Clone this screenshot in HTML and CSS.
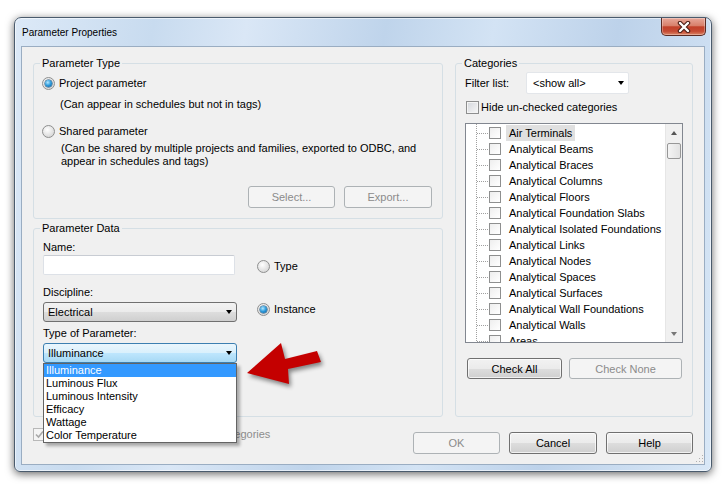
FILE: index.html
```html
<!DOCTYPE html>
<html lang="en">
<head>
<meta charset="UTF-8">
<title>Parameter Properties</title>
<link rel="stylesheet" href="styles.css">
</head>
<body>

<!-- Dialog window -->
<div class="window">
    <div class="titlebar">
        <span class="title">Parameter Properties</span>
        <button class="close">
            <svg width="14" height="12" viewBox="0 0 14 12">
                <path d="M3 2 L11 10 M11 2 L3 10" stroke="#4a1d15" stroke-width="4.5" stroke-linecap="round"/>
                <path d="M3 2 L11 10 M11 2 L3 10" stroke="#fff" stroke-width="2.4" stroke-linecap="round"/>
            </svg>
        </button>
    </div>

    <div class="client">
        <div class="main">
            <div class="col-left">
                <!-- Parameter Type -->
                <fieldset class="group group-type">
                    <legend>Parameter Type</legend>
                    <div class="radio-row rr-project"><span class="radio checked"></span>Project parameter</div>
                    <div class="hint hint-project">(Can appear in schedules but not in tags)</div>
                    <div class="radio-row rr-shared"><span class="radio"></span>Shared parameter</div>
                    <div class="hint hint-shared">(Can be shared by multiple projects and families, exported to ODBC, and<br>appear in schedules and tags)</div>
                    <div class="btn-row">
                        <button class="btn disabled">Select...</button>
                        <button class="btn btn-wide disabled">Export...</button>
                    </div>
                </fieldset>

                <!-- Parameter Data -->
                <fieldset class="group group-data">
                    <legend>Parameter Data</legend>
                    <div class="data-cols">
                        <div class="data-fields">
                            <div class="label lbl-name">Name:</div>
                            <div class="textbox"></div>
                            <div class="label lbl-disc">Discipline:</div>
                            <div class="combo">Electrical<span class="caret"></span></div>
                            <div class="label lbl-type">Type of Parameter:</div>
                            <div class="combo-wrap">
                                <div class="combo focused">Illuminance<span class="caret"></span></div>
                                <ul class="droplist">
                                    <li class="sel">Illuminance</li>
                                    <li>Luminous Flux</li>
                                    <li>Luminous Intensity</li>
                                    <li>Efficacy</li>
                                    <li>Wattage</li>
                                    <li>Color Temperature</li>
                                </ul>
                            </div>
                        </div>
                        <div class="data-radios">
                            <div class="radio-row rr-type"><span class="radio"></span>Type</div>
                            <div class="radio-row rr-inst"><span class="radio checked"></span>Instance</div>
                        </div>
                    </div>
                </fieldset>
            </div>

            <!-- Categories -->
            <fieldset class="group group-cats">
                <legend>Categories</legend>
                <div class="filter-row">
                    <span class="filter-label">Filter list:</span>
                    <div class="combo combo-white">&lt;show all&gt;<span class="caret"></span></div>
                </div>
                <div class="hide-row"><span class="check"></span>Hide un-checked categories</div>
                <div class="tree-box">
                    <ul class="tree">
                        <li class="hot"><span class="check"></span><span class="name">Air Terminals</span></li>
                        <li><span class="check"></span><span class="name">Analytical Beams</span></li>
                        <li><span class="check"></span><span class="name">Analytical Braces</span></li>
                        <li><span class="check"></span><span class="name">Analytical Columns</span></li>
                        <li><span class="check"></span><span class="name">Analytical Floors</span></li>
                        <li><span class="check"></span><span class="name">Analytical Foundation Slabs</span></li>
                        <li><span class="check"></span><span class="name">Analytical Isolated Foundations</span></li>
                        <li><span class="check"></span><span class="name">Analytical Links</span></li>
                        <li><span class="check"></span><span class="name">Analytical Nodes</span></li>
                        <li><span class="check"></span><span class="name">Analytical Spaces</span></li>
                        <li><span class="check"></span><span class="name">Analytical Surfaces</span></li>
                        <li><span class="check"></span><span class="name">Analytical Wall Foundations</span></li>
                        <li><span class="check"></span><span class="name">Analytical Walls</span></li>
                        <li><span class="check"></span><span class="name">Areas</span></li>
                    </ul>
                    <div class="vscroll">
                        <span class="sb-btn"><span class="tri-up"></span></span>
                        <span class="sb-thumb"></span>
                        <span class="sb-btn sb-down"><span class="tri-down"></span></span>
                    </div>
                </div>
                <div class="cat-btns">
                    <button class="btn btn-checkall">Check All</button>
                    <button class="btn btn-checknone disabled">Check None</button>
                </div>
            </fieldset>
        </div>

        <div class="bottom">
            <div class="check-row disabled">
                <span class="check checked">
                    <svg width="11" height="11" viewBox="0 0 11 11"><path d="M2 5.5 L4.5 8 L9 2.5" fill="none" stroke="#a8a8a8" stroke-width="1.6"/></svg>
                </span>Add to all elements in the selected categories
            </div>
            <div class="dlg-buttons">
                <button class="btn disabled">OK</button>
                <button class="btn btn-wide">Cancel</button>
                <button class="btn">Help</button>
            </div>
        </div>

        <svg class="grip" width="8" height="8" viewBox="0 0 8 8">
            <rect x="6" y="0" width="1" height="1" fill="#b0b0b0"/>
            <rect x="3" y="3" width="1" height="1" fill="#b0b0b0"/>
            <rect x="6" y="3" width="1" height="1" fill="#b0b0b0"/>
            <rect x="0" y="6" width="1" height="1" fill="#b0b0b0"/>
            <rect x="3" y="6" width="1" height="1" fill="#b0b0b0"/>
            <rect x="6" y="6" width="1" height="1" fill="#b0b0b0"/>
        </svg>
    </div>
</div>

<!-- Red callout arrow -->
<svg class="arrow" width="90" height="55" viewBox="0 0 90 55">
    <polygon points="7,37 41,7 45,23 77,15 81,26 48,33 49,48" fill="#c40000"/>
</svg>

</body>
</html>
```

FILE: styles.css
```css
body {
    margin: 0;
    width: 724px;
    height: 485px;
    background: #fff;
    font-family: "Liberation Sans", Arial, sans-serif;
    font-size: 11px;
    color: #000;
    position: relative;
    overflow: hidden;
}

button {
    font: inherit;
    padding: 0;
}

/* window frame */
.window {
    box-sizing: border-box;
    width: 698px;
    height: 455px;
    margin: 17px 0 0 14px;
    padding: 0 6px 6px 6px;
    border: 1px solid #4a5b6d;
    border-radius: 7px 7px 6px 6px;
    background: linear-gradient(100deg, #dce9f7 0%, #c8dbef 18%, #dae7f6 30%, #bfd4eb 48%, #d3e3f4 62%, #bdd2ea 78%, #d9e8f7 100%);
    box-shadow: 0 2px 8px rgba(0, 0, 0, 0.6), inset 0 0 0 1px rgba(255, 255, 255, 0.55);
}

.titlebar {
    display: flex;
    justify-content: space-between;
    align-items: flex-start;
    height: 28px;
}

.title {
    margin: 8px 0 0 1px;
    line-height: 14px;
    font-size: 10px;
}

.close {
    box-sizing: border-box;
    width: 45px;
    height: 18px;
    margin-right: -1px;
    border: 1px solid #5b2a22;
    border-top: 0;
    border-radius: 0 0 5px 5px;
    background: linear-gradient(#e8a89a 0%, #d8806b 45%, #c2412a 52%, #c54b34 78%, #db8767 100%);
    box-shadow: inset 0 0 0 1px rgba(255, 255, 255, 0.3);
    display: flex;
    align-items: center;
    justify-content: center;
}

/* client area */
.client {
    position: relative;
    box-sizing: border-box;
    height: 419px;
    border: 1px solid #9aadc2;
    background: #f0f0f0;
    padding: 9px 11px 0 11px;
}

.main {
    display: flex;
    gap: 12px;
    height: 361px;
}

.col-left {
    width: 410px;
    display: flex;
    flex-direction: column;
    gap: 2px;
}

.group {
    box-sizing: border-box;
    margin: 0;
    padding: 0;
    min-width: 0;
    border: 1px solid #d5dfe5;
    border-radius: 3px;
}

.group legend {
    margin-left: 6px;
    padding: 0 2px;
    line-height: 14px;
}

.group-type { height: 163px; }
.group-data { height: 196px; }
.group-cats { width: 238px; height: 361px; }

/* radios and checks */
.radio-row {
    display: flex;
    align-items: center;
    gap: 4px;
    height: 14px;
}

.radio {
    box-sizing: border-box;
    width: 13px;
    height: 13px;
    flex: none;
    border: 1px solid #8e8f8f;
    border-radius: 50%;
    background: radial-gradient(circle at 40% 35%, #ffffff, #dedede 65%, #cfcfcf);
    display: flex;
    align-items: center;
    justify-content: center;
}

.radio.checked::after {
    content: "";
    width: 7px;
    height: 7px;
    border-radius: 50%;
    background: radial-gradient(circle at 40% 35%, #b4e8ff, #2a98da 50%, #0b5894);
    box-shadow: 0 0 0 0.5px #174a72;
}

.check {
    box-sizing: border-box;
    width: 13px;
    height: 13px;
    flex: none;
    border: 1px solid #8e8f8f;
    background: linear-gradient(135deg, #d4d7dc, #f7f7f7);
    box-shadow: inset 0 0 0 1px #f4f4f4;
    display: flex;
    align-items: center;
    justify-content: center;
}

.check-row.disabled .check {
    border-color: #b8b8b8;
    background: #f4f4f4;
}

/* parameter type */
.rr-project { margin: 6px 0 0 8px; }
.hint { line-height: 14px; }
.hint-project { margin: 7px 0 0 26px; }
.rr-shared { margin: 13px 0 0 8px; }
.hint-shared { margin: 4px 0 0 27px; line-height: 13px; }

.btn-row {
    display: flex;
    justify-content: flex-end;
    gap: 9px;
    margin-top: 18px;
    padding-right: 10px;
}

/* buttons */
.btn {
    box-sizing: border-box;
    width: 87px;
    height: 22px;
    color: #000;
    border: 1px solid #707070;
    border-radius: 3px;
    background: linear-gradient(#f2f2f2 0%, #ebebeb 50%, #dddddd 51%, #cfcfcf 100%);
    box-shadow: inset 0 0 0 1px rgba(255, 255, 255, 0.7);
}

.btn-wide { width: 88px; }

.btn.disabled {
    color: #8b8b8b;
    border-color: #adb2b5;
    background: #f4f4f4;
    box-shadow: none;
}

/* parameter data */
.data-cols {
    display: flex;
    padding-left: 9px;
}

.data-fields {
    width: 194px;
    display: flex;
    flex-direction: column;
}

.label { line-height: 14px; }
.lbl-name { margin-top: 5px; }
.lbl-disc { margin-top: 10px; }
.lbl-type { margin-top: 4px; }

.textbox {
    box-sizing: border-box;
    width: 192px;
    height: 20px;
    margin-top: 1px;
    background: #fff;
    border: 1px solid #dde1e7;
    border-top-color: #c8ccd3;
    border-radius: 2px;
}

.combo {
    box-sizing: border-box;
    height: 20px;
    margin-top: 3px;
    padding: 0 4px 0 4px;
    display: flex;
    align-items: center;
    border: 1px solid #707070;
    border-radius: 3px;
    background: linear-gradient(#f2f2f2 0%, #ebebeb 50%, #dddddd 51%, #cfcfcf 100%);
}

.combo.focused {
    border-color: #3c7fb1;
    background: linear-gradient(#eaf6fd 0%, #d9f0fc 50%, #bee6fd 51%, #a7d9f5 100%);
}

.caret {
    margin-left: auto;
    width: 0;
    height: 0;
    border-left: 3.5px solid transparent;
    border-right: 3.5px solid transparent;
    border-top: 4px solid #000;
}

.combo-wrap {
    position: relative;
}

.droplist {
    position: absolute;
    z-index: 5;
    left: 0;
    top: 100%;
    box-sizing: border-box;
    width: 194px;
    margin: 0;
    padding: 0;
    list-style: none;
    background: #fff;
    border: 1px solid #646464;
    box-shadow: 3px 3px 3px rgba(0, 0, 0, 0.3);
}

.droplist li {
    line-height: 13px;
    padding-left: 2px;
}

.droplist li.sel {
    background: #3399ff;
    color: #fff;
}

.data-radios {
    margin-left: 20px;
}

.rr-type { margin-top: 24px; }
.rr-inst { margin-top: 29px; }

/* categories */
.filter-row {
    display: flex;
    align-items: center;
    margin: 2px 0 0 9px;
}

.filter-label { width: 61px; }

.combo-white {
    width: 103px;
    height: 22px;
    margin-top: 0;
    padding-left: 6px;
    background: #fff;
    border-color: #e3e6ea;
    border-radius: 2px;
}

.hide-row {
    display: flex;
    align-items: center;
    gap: 2px;
    height: 14px;
    margin: 6px 0 0 10px;
}

.tree-box {
    box-sizing: border-box;
    display: flex;
    width: 218px;
    height: 220px;
    margin: 9px 0 0 9px;
    border: 1px solid #828790;
    background: #fff;
}

.tree {
    flex: 1;
    margin: 0;
    padding: 1px 0 0 0;
    list-style: none;
    overflow: hidden;
    background: repeating-linear-gradient(#a0a0a0 0 1px, transparent 1px 2px) 10px 0 / 1px 100% no-repeat;
}

.tree li {
    display: flex;
    align-items: center;
    height: 16px;
}

.tree li::before {
    content: "";
    width: 11px;
    height: 1px;
    margin-left: 11px;
    background: repeating-linear-gradient(90deg, #a0a0a0 0 1px, transparent 1px 2px);
}

.tree .check {
    width: 12px;
    height: 12px;
    margin-left: 1px;
    background: linear-gradient(135deg, #eeeeee, #ffffff);
    box-shadow: none;
}

.tree .name {
    margin-left: 5px;
    padding: 0 3px;
    line-height: 16px;
    white-space: nowrap;
}

.tree li.hot .name {
    background: #e0e0e0;
}

.vscroll {
    width: 16px;
    display: flex;
    flex-direction: column;
    background: #f0f0f0;
    border-left: 1px solid #e6e6e6;
}

.sb-btn {
    height: 17px;
    display: flex;
    align-items: center;
    justify-content: center;
}

.sb-down { margin-top: auto; }

.tri-up, .tri-down {
    width: 0;
    height: 0;
    border-left: 3.5px solid transparent;
    border-right: 3.5px solid transparent;
}

.tri-up { border-bottom: 4px solid #555; }
.tri-down { border-top: 4px solid #777; }

.sb-thumb {
    box-sizing: border-box;
    height: 16px;
    margin: 2px 0 0 1px;
    width: 14px;
    border: 1px solid #979797;
    border-radius: 2px;
    background: linear-gradient(90deg, #f4f4f4, #e2e2e2);
}

.cat-btns {
    display: flex;
    gap: 7px;
    margin: 15px 0 0 11px;
}

.cat-btns .btn { height: 21px; }
.btn-checkall { width: 95px; }
.btn-checknone { width: 113px; }

/* bottom row */
.bottom {
    display: flex;
    justify-content: space-between;
    align-items: flex-start;
    margin-top: 10px;
}

.check-row {
    display: flex;
    align-items: center;
    gap: 3px;
    line-height: 14px;
    color: #8d8d8d;
}

.dlg-buttons {
    display: flex;
    gap: 9px;
    margin-top: 5px;
}

.grip {
    position: absolute;
    right: 0;
    bottom: 1px;
}

/* callout arrow */
.arrow {
    position: absolute;
    left: 240px;
    top: 336px;
    filter: drop-shadow(2px 3px 2px rgba(0, 0, 0, 0.45));
}
```
